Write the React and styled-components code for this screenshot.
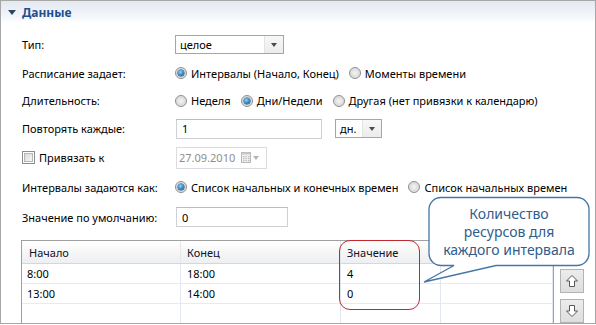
import React from "react";
import styled, { createGlobalStyle } from "styled-components";

const GlobalStyle = createGlobalStyle`
  html, body {
    margin: 0;
    padding: 0;
    background: #ffffff;
  }
  body {
    font-family: "Noto Sans", "Open Sans", sans-serif;
    font-size: 11px;
    color: #000;
  }
`;

const Panel = styled.div`
  position: relative;
  box-sizing: border-box;
  width: 596px;
  height: 324px;
  border: 1px solid #a7a7a7;
  overflow: hidden;
  display: flex;
  flex-direction: column;
`;

const Header = styled.div`
  height: 22px;
  flex: none;
  display: flex;
  align-items: center;
  padding-left: 7px;
  gap: 6px;
  background: linear-gradient(#e4e9f1, #f3f6fa 70%, #ffffff);
`;

const Caret = styled.span`
  width: 0;
  height: 0;
  border-left: 4px solid transparent;
  border-right: 4px solid transparent;
  border-top: 5px solid #2c4565;
  margin-top: 1px;
`;

const Title = styled.span`
  font-weight: bold;
  font-size: 12px;
  color: #1e4f8f;
`;

const Form = styled.div`
  display: flex;
  flex-direction: column;
  padding: 7px 0 0 21px;
`;

const Row = styled.div`
  display: flex;
  align-items: center;
  height: ${(p) => p.h}px;
  white-space: nowrap;
`;

const Label = styled.div`
  width: 153px;
  flex: none;
`;

const Combo = styled.div`
  box-sizing: border-box;
  width: ${(p) => p.w}px;
  height: 19px;
  border: 1px solid #a3a6ab;
  display: flex;
  align-items: stretch;
  background: #fff;
`;

const ComboText = styled.div`
  flex: 1;
  display: flex;
  align-items: center;
  padding-left: 4px;
`;

const ComboButton = styled.div`
  width: 18px;
  border-left: 1px solid #e2e3e5;
  background: linear-gradient(#f7f7f7, #ececec);
  display: flex;
  align-items: center;
  justify-content: center;
  &::after {
    content: "";
    border-left: 3.5px solid transparent;
    border-right: 3.5px solid transparent;
    border-top: 4px solid #4a4a4a;
  }
`;

const TextInput = styled.div`
  box-sizing: border-box;
  width: ${(p) => p.w}px;
  height: 20px;
  border: 1px solid #cdd0d4;
  border-top-color: #b9bcc1;
  display: flex;
  align-items: center;
  padding-left: 5px;
  margin-left: 1px;
`;

const Options = styled.div`
  display: flex;
  align-items: center;
  gap: 10px;
`;

const Option = styled.label`
  display: flex;
  align-items: center;
  gap: 4px;
`;

const Radio = styled.span`
  box-sizing: border-box;
  width: 12px;
  height: 12px;
  border-radius: 50%;
  border: 1px solid #8b8d90;
  background: radial-gradient(circle at 50% 50%, #f4f4f4 0, #dcdcdc 60%, #f6f6f6 100%);
  display: flex;
  align-items: center;
  justify-content: center;
  &::after {
    content: "";
    width: 6px;
    height: 6px;
    border-radius: 50%;
    display: ${(p) => (p.checked ? "block" : "none")};
    background: radial-gradient(circle at 40% 35%, #8ad8f8 0, #2d86c8 55%, #18466e 100%);
    box-shadow: 0 0 0 0.5px #1b3f63;
  }
`;

const Checkbox = styled.span`
  box-sizing: border-box;
  width: 13px;
  height: 13px;
  border: 1px solid #8b8d90;
  background: #fff;
  padding: 1px;
  margin-right: 4px;
  &::after {
    content: "";
    display: block;
    width: 100%;
    height: 100%;
    box-sizing: border-box;
    border: 1px solid #b4b6b9;
    background: linear-gradient(135deg, #d8d9db, #f6f6f6);
  }
`;

const DateField = styled.div`
  box-sizing: border-box;
  width: 91px;
  height: 22px;
  margin-left: 1px;
  border: 1px solid #dadcdf;
  display: flex;
  align-items: center;
  padding-left: 2px;
  gap: 6px;
  color: #8d8d8d;
`;

const DateArrow = styled.span`
  border-left: 3.5px solid transparent;
  border-right: 3.5px solid transparent;
  border-top: 4px solid #b5b5b5;
  margin-left: -4px;
`;

const TableArea = styled.div`
  display: flex;
  margin: 8px 0 0 -1px;
`;

const Table = styled.div`
  box-sizing: border-box;
  width: 533px;
  height: 100px;
  border: 1px solid #a0a0a0;
  border-bottom: none;
  display: grid;
  grid-template-columns: 159px 160px 100px 1fr;
  grid-auto-rows: 20px;
  grid-template-rows: 23px;
  align-content: start;
`;

const HeadCell = styled.div`
  display: flex;
  align-items: center;
  padding-left: ${(p) => p.pad}px;
  background: linear-gradient(#ffffff, #f6f6f7 50%, #eeeff1);
  border-bottom: 1px solid #d5d7da;
  border-right: 1px solid #e4e6ea;
  color: #10102a;
`;

const Cell = styled.div`
  box-sizing: border-box;
  display: flex;
  align-items: center;
  padding-left: ${(p) => p.pad}px;
  border-bottom: 1px solid #e7eaef;
  border-right: 1px solid #e1e7f0;
`;

const Side = styled.div`
  display: flex;
  flex-direction: column;
  gap: 6px;
  padding: 29px 0 0 6px;
`;

const SideButton = styled.div`
  box-sizing: border-box;
  width: 24px;
  height: 24px;
  border: 1px solid #b3b3b3;
  background: linear-gradient(#ececec, #dedede);
  display: flex;
  align-items: center;
  justify-content: center;
`;

const Highlight = styled.div`
  position: absolute;
  left: 338px;
  top: 239px;
  width: 81px;
  height: 70px;
  box-sizing: border-box;
  border: 1.5px solid #c3272e;
  border-radius: 11px;
  pointer-events: none;
`;

const Callout = styled.div`
  position: absolute;
  left: 419px;
  top: 194px;
  width: 171px;
  height: 90px;
`;

const CalloutText = styled.div`
  position: absolute;
  left: 9px;
  top: 10px;
  width: 160px;
  text-align: center;
  font-size: 14px;
  line-height: 18px;
  color: #2f5d8c;
`;

function CalendarIcon() {
  return (
    <svg width="10" height="11" viewBox="0 0 10 11">
      <rect x="0.5" y="0.5" width="9" height="10" fill="#f2f2f2" stroke="#b8b8b8" />
      <rect x="0.5" y="0.5" width="9" height="2" fill="#c8c8c8" />
      {[2, 4.5, 7].map((x) =>
        [4, 6, 8].map((y) => (
          <rect key={x + "-" + y} x={x} y={y} width="1.5" height="1.2" fill="#bdbdbd" />
        ))
      )}
    </svg>
  );
}

function BlockArrow({ down }) {
  return (
    <svg width="14" height="14" viewBox="0 0 14 14" style={down ? { transform: "rotate(180deg)" } : undefined}>
      <path d="M7 1.5 L12.5 7 H9.5 V12.5 H4.5 V7 H1.5 Z" fill="#fff" stroke="#585858" strokeWidth="1" strokeLinejoin="miter" />
    </svg>
  );
}

const rows = [
  { start: "8:00", end: "18:00", value: "4" },
  { start: "13:00", end: "14:00", value: "0" },
  { start: "", end: "", value: "" },
  { start: "", end: "", value: "" },
];

export default function App() {
  return (
    <>
      <GlobalStyle />
      <Panel>
        <Header>
          <Caret />
          <Title>Данные</Title>
        </Header>
        <Form>
          <Row h={29}>
            <Label>Тип:</Label>
            <Combo w={109}>
              <ComboText>целое</ComboText>
              <ComboButton />
            </Combo>
          </Row>
          <Row h={28}>
            <Label>Расписание задает:</Label>
            <Options>
              <Option>
                <Radio checked />
                Интервалы (Начало, Конец)
              </Option>
              <Option>
                <Radio />
                Моменты времени
              </Option>
            </Options>
          </Row>
          <Row h={27}>
            <Label>Длительность:</Label>
            <Options>
              <Option>
                <Radio />
                Неделя
              </Option>
              <Option>
                <Radio checked />
                Дни/Недели
              </Option>
              <Option>
                <Radio />
                Другая (нет привязки к календарю)
              </Option>
            </Options>
          </Row>
          <Row h={29}>
            <Label>Повторять каждые:</Label>
            <TextInput w={146}>1</TextInput>
            <Combo w={47} style={{ marginLeft: 13 }}>
              <ComboText>дн.</ComboText>
              <ComboButton />
            </Combo>
          </Row>
          <Row h={29}>
            <Checkbox />
            <Label style={{ width: 136 }}>Привязать к</Label>
            <DateField>
              27.09.2010
              <CalendarIcon />
              <DateArrow />
            </DateField>
          </Row>
          <Row h={30}>
            <Label>Интервалы задаются как:</Label>
            <Options>
              <Option>
                <Radio checked />
                Список начальных и конечных времен
              </Option>
              <Option>
                <Radio />
                Список начальных времен
              </Option>
            </Options>
          </Row>
          <Row h={30}>
            <Label>Значение по умолчанию:</Label>
            <TextInput w={112}>0</TextInput>
          </Row>
          <TableArea>
            <Table>
              <HeadCell pad={7}>Начало</HeadCell>
              <HeadCell pad={6}>Конец</HeadCell>
              <HeadCell pad={6}>Значение</HeadCell>
              <HeadCell pad={6} />
              {rows.map((r, i) => (
                <React.Fragment key={i}>
                  <Cell pad={5}>{r.start}</Cell>
                  <Cell pad={6}>{r.end}</Cell>
                  <Cell pad={6}>{r.value}</Cell>
                  <Cell pad={6} />
                </React.Fragment>
              ))}
            </Table>
            <Side>
              <SideButton>
                <BlockArrow />
              </SideButton>
              <SideButton>
                <BlockArrow down />
              </SideButton>
            </Side>
          </TableArea>
        </Form>
        <Highlight />
        <Callout>
          <svg width="171" height="90" viewBox="0 0 171 90">
            <path
              d="M21 2.5 H157 A12 12 0 0 1 169 14.5 V58.5 A12 12 0 0 1 157 70.5 H76 L4 87 L34 70.5 H21 A12 12 0 0 1 9 58.5 V14.5 A12 12 0 0 1 21 2.5 Z"
              fill="#ffffff"
              stroke="#4676a6"
              strokeWidth="1.3"
            />
          </svg>
          <CalloutText>
            Количество
            <br />
            ресурсов для
            <br />
            каждого интервала
          </CalloutText>
        </Callout>
      </Panel>
    </>
  );
}
